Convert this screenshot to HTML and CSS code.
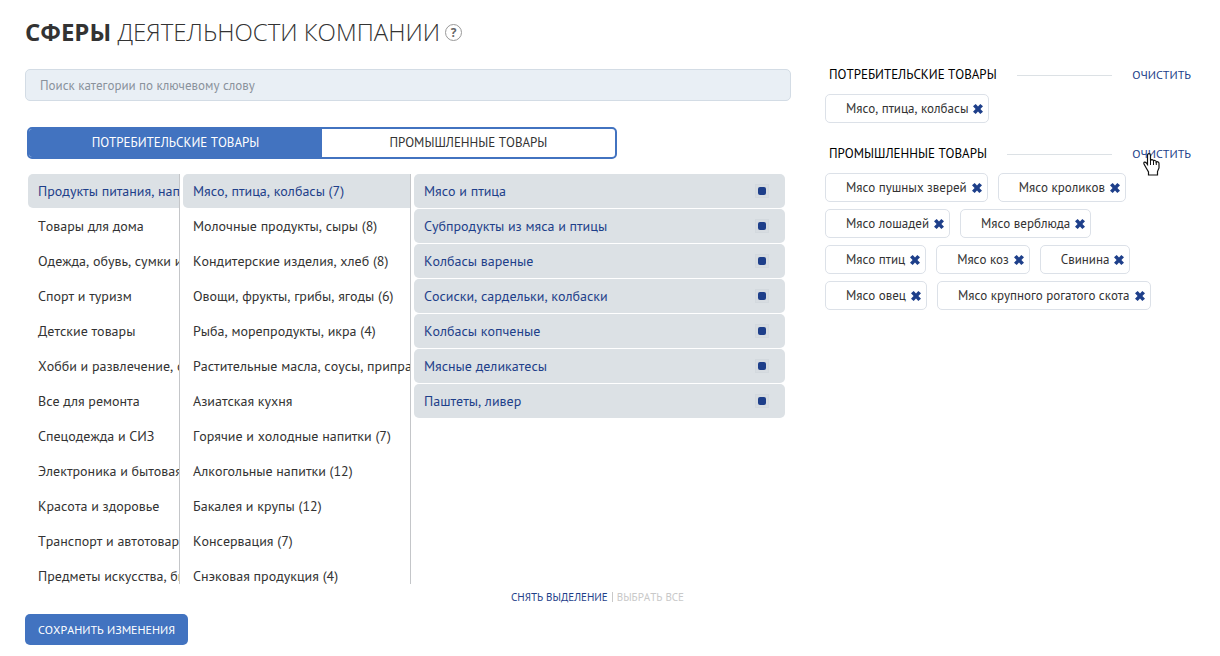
FILE: index.html
```html
<!DOCTYPE html>
<html lang="ru">
<head>
<meta charset="utf-8">
<title>Сферы деятельности компании</title>
<meta name="viewport" content="width=device-width, initial-scale=1">
<link rel="stylesheet" href="styles.css">
</head>
<body>
<svg class="defs" aria-hidden="true">
  <symbol id="cross" viewBox="0 0 10 10"><path d="M2.700 0 5 2.500 7.300 0 10 2.200 7.400 5 10 7.800 7.300 10 5 7.500 2.700 10 0 7.800 2.600 5 0 2.200z" fill="currentColor"/></symbol>
</svg>
<div class="page">
  <header class="title">
    <h1 class="title__text"><b>СФЕРЫ</b> ДЕЯТЕЛЬНОСТИ КОМПАНИИ</h1>
    <button class="help" type="button" aria-label="Справка">?</button>
  </header>

  <div class="layout">
    <main class="main">
      <input class="search" type="search" aria-label="Поиск категории" placeholder="Поиск категории по ключевому слову">

      <div class="tabs" role="tablist">
        <button class="tab tab--active" type="button" role="tab" aria-selected="true">ПОТРЕБИТЕЛЬСКИЕ ТОВАРЫ</button>
        <button class="tab" type="button" role="tab" aria-selected="false">ПРОМЫШЛЕННЫЕ ТОВАРЫ</button>
      </div>

      <div class="columns">
        <ul class="list list--bordered">
          <li><a class="item item--active" href="#">Продукты питания, напитки</a></li>
          <li><a class="item" href="#">Товары для дома</a></li>
          <li><a class="item" href="#">Одежда, обувь, сумки и</a></li>
          <li><a class="item" href="#">Спорт и туризм</a></li>
          <li><a class="item" href="#">Детские товары</a></li>
          <li><a class="item" href="#">Хобби и развлечение, спорт</a></li>
          <li><a class="item" href="#">Все для ремонта</a></li>
          <li><a class="item" href="#">Спецодежда и СИЗ</a></li>
          <li><a class="item" href="#">Электроника и бытовая</a></li>
          <li><a class="item" href="#">Красота и здоровье</a></li>
          <li><a class="item" href="#">Транспорт и автотовары</a></li>
          <li><a class="item" href="#">Предметы искусства, бизнес</a></li>
        </ul>
        <ul class="list list--bordered">
          <li><a class="item item--active" href="#">Мясо, птица, колбасы (7)</a></li>
          <li><a class="item" href="#">Молочные продукты, сыры (8)</a></li>
          <li><a class="item" href="#">Кондитерские изделия, хлеб (8)</a></li>
          <li><a class="item" href="#">Овощи, фрукты, грибы, ягоды (6)</a></li>
          <li><a class="item" href="#">Рыба, морепродукты, икра (4)</a></li>
          <li><a class="item" href="#">Растительные масла, соусы, приправы</a></li>
          <li><a class="item" href="#">Азиатская кухня</a></li>
          <li><a class="item" href="#">Горячие и холодные напитки (7)</a></li>
          <li><a class="item" href="#">Алкогольные напитки (12)</a></li>
          <li><a class="item" href="#">Бакалея и крупы (12)</a></li>
          <li><a class="item" href="#">Консервация (7)</a></li>
          <li><a class="item" href="#">Снэковая продукция (4)</a></li>
        </ul>
        <ul class="list">
          <li><label class="item item--check">Мясо и птица<input class="check" type="checkbox" checked></label></li>
          <li><label class="item item--check">Субпродукты из мяса и птицы<input class="check" type="checkbox" checked></label></li>
          <li><label class="item item--check">Колбасы вареные<input class="check" type="checkbox" checked></label></li>
          <li><label class="item item--check">Сосиски, сардельки, колбаски<input class="check" type="checkbox" checked></label></li>
          <li><label class="item item--check">Колбасы копченые<input class="check" type="checkbox" checked></label></li>
          <li><label class="item item--check">Мясные деликатесы<input class="check" type="checkbox" checked></label></li>
          <li><label class="item item--check">Паштеты, ливер<input class="check" type="checkbox" checked></label></li>
        </ul>
      </div>

      <div class="bulk">
        <button class="bulk__link" type="button">СНЯТЬ ВЫДЕЛЕНИЕ</button>
        <span class="bulk__rule"></span>
        <button class="bulk__link" type="button" disabled>ВЫБРАТЬ ВСЕ</button>
      </div>

      <button class="save" type="submit">СОХРАНИТЬ ИЗМЕНЕНИЯ</button>
    </main>

    <aside class="chosen">
      <section class="group">
        <div class="group__head">
          <h2 class="group__title">ПОТРЕБИТЕЛЬСКИЕ ТОВАРЫ</h2>
          <span class="group__line"></span>
          <button class="clear" type="button">ОЧИСТИТЬ</button>
        </div>
        <ul class="chips">
          <li class="chip">Мясо, птица, колбасы<button class="chip__x" type="button" aria-label="Удалить"><svg><use href="#cross"/></svg></button></li>
        </ul>
      </section>
      <section class="group">
        <div class="group__head">
          <h2 class="group__title">ПРОМЫШЛЕННЫЕ ТОВАРЫ</h2>
          <span class="group__line"></span>
          <button class="clear" type="button">ОЧИСТИТЬ
            <svg class="pointer" viewBox="0 0 17 23" aria-hidden="true"><path d="M4.500 2.500q0-1.800 1.500-1.800t1.500 1.800v5q.2-.9 1.500-.9t1.500 1.400q.3-.7 1.500-.5 1.200.2 1.200 1.500.5-.5 1.600-.2 1.200.3 1.200 1.600v4.600l-1.500 3.500v3.500H5.500v-3l-2-3.500-2.500-4.500q-.5-1.500.6-1.800 1-.2 1.900 1l1 1.300z" fill="#fff" stroke="#111" stroke-width="1.200"/><path d="M7.500 7v5M10.500 8v4M13.300 9v3" fill="none" stroke="#111"/></svg>
          </button>
        </div>
        <ul class="chips">
          <li class="chip">Мясо пушных зверей<button class="chip__x" type="button" aria-label="Удалить"><svg><use href="#cross"/></svg></button></li>
          <li class="chip">Мясо кроликов<button class="chip__x" type="button" aria-label="Удалить"><svg><use href="#cross"/></svg></button></li>
          <li class="chip">Мясо лошадей<button class="chip__x" type="button" aria-label="Удалить"><svg><use href="#cross"/></svg></button></li>
          <li class="chip">Мясо верблюда<button class="chip__x" type="button" aria-label="Удалить"><svg><use href="#cross"/></svg></button></li>
          <li class="chip">Мясо птиц<button class="chip__x" type="button" aria-label="Удалить"><svg><use href="#cross"/></svg></button></li>
          <li class="chip">Мясо коз<button class="chip__x" type="button" aria-label="Удалить"><svg><use href="#cross"/></svg></button></li>
          <li class="chip">Свинина<button class="chip__x" type="button" aria-label="Удалить"><svg><use href="#cross"/></svg></button></li>
          <li class="chip">Мясо овец<button class="chip__x" type="button" aria-label="Удалить"><svg><use href="#cross"/></svg></button></li>
          <li class="chip">Мясо крупного рогатого скота<button class="chip__x" type="button" aria-label="Удалить"><svg><use href="#cross"/></svg></button></li>
        </ul>
      </section>
    </aside>
  </div>
</div>
</body>
</html>
```
FILE: styles.css
```css
* { box-sizing: border-box; }

body {
  margin: 0;
  background: #fff;
  color: #333;
  font: 14px/20px "PT Sans", "Noto Sans", sans-serif;
  font-kerning: none;
}

button, input { font: inherit; font-kerning: inherit; color: inherit; }
button { padding: 0; border: 0; background: none; cursor: pointer; }
ul { margin: 0; padding: 0; list-style: none; }

.defs { display: none; }

.page { padding: 16px 29px 11px 25px; }

.title { display: flex; align-items: center; gap: 5px; }
.title__text { margin: 0; font: 300 24px/32px "Open Sans", sans-serif; font-kerning: auto; }
.title__text b { font-weight: 700; }

.help {
  width: 17px;
  height: 17px;
  border: 1px solid #999;
  border-radius: 50%;
  color: #666;
  font: 700 12px/15px "Open Sans", sans-serif;
}

.layout {
  display: grid;
  grid-template-columns: minmax(0, 766fr) minmax(0, 366fr);
  gap: 34px;
  margin-top: 21px;
}

.search {
  display: block;
  width: 100%;
  height: 32px;
  padding: 0 14px;
  border: 1px solid #d3dce5;
  border-radius: 5px;
  background: #e9eff5;
  font-size: 13px;
}
.search::placeholder { color: #8a929c; opacity: 1; }

.tabs {
  display: flex;
  width: 77%;
  margin: 26px 0 0 2px;
  border: 2px solid #4273c0;
  border-radius: 5px;
  overflow: hidden;
}
.tab { flex: 1; height: 28px; font-size: 13px; }
.tab--active { background: #4273c0; color: #fff; }

.columns {
  display: grid;
  grid-template-columns: minmax(0, 152fr) minmax(0, 228fr) minmax(0, 371fr);
  gap: 3px;
  max-height: 410px;
  margin: 15px 6px 0 3px;
  overflow: hidden;
}
.list { display: flex; flex-direction: column; gap: 1px; overflow: hidden; }
.list--bordered { border-right: 1px solid #c4c6c9; }

.item {
  display: block;
  padding: 7px 0 7px 10px;
  border-radius: 5px;
  color: #333;
  text-decoration: none;
  white-space: nowrap;
}
.item--active { border-radius: 5px 0 0 5px; background: #dce1e5; color: #1e3f8a; }
.item--check {
  display: flex;
  align-items: center;
  justify-content: space-between;
  padding-right: 16px;
  background: #dce1e5;
  color: #1e3f8a;
}

.check {
  appearance: none;
  display: grid;
  place-items: center;
  width: 14px;
  height: 14px;
  margin: 0;
  border: 1px solid #d3d9de;
  background: #d7dce1;
}
.check:checked::before {
  content: "";
  width: 8px;
  height: 8px;
  border-radius: 2px;
  background: #1e3f8a;
}

.bulk {
  display: flex;
  align-items: center;
  justify-content: flex-end;
  gap: 4px;
  margin: 4px 107px 0 0;
  font-size: 11px;
  line-height: 18px;
}
.bulk__link { color: #1e3f8a; }
.bulk__link:disabled { color: #c9c9c9; }
.bulk__rule { width: 1px; height: 10px; background: #c9c9c9; }

.save {
  height: 31px;
  margin-top: 8px;
  padding: 0 13px;
  border-radius: 5px;
  background: #4273c0;
  color: #fff;
  font-size: 12px;
}

.group + .group { margin-top: 25px; }
.group__head { display: flex; align-items: center; height: 12px; padding-left: 4px; }
.group__title { margin: 0; color: #000; font-size: 13px; font-weight: 400; line-height: 20px; }
.group__line { flex: 1; height: 1px; margin: 0 20px; background: #dce1e5; }
.clear { position: relative; color: #1e3f8a; font-size: 12px; line-height: 20px; }
.pointer { position: absolute; top: 9px; left: 11px; width: 17px; height: 23px; }

.chips { display: flex; flex-wrap: wrap; gap: 7px 10px; margin-top: 13px; }
.chip {
  display: flex;
  align-items: center;
  height: 29px;
  padding: 0 5px 0 20px;
  border: 1px solid #dce1e8;
  border-radius: 5px;
  font-size: 13px;
}
.chip__x { display: flex; margin-left: 5px; color: #1e3f8a; }
.chip__x svg { width: 10px; height: 10px; }
```
